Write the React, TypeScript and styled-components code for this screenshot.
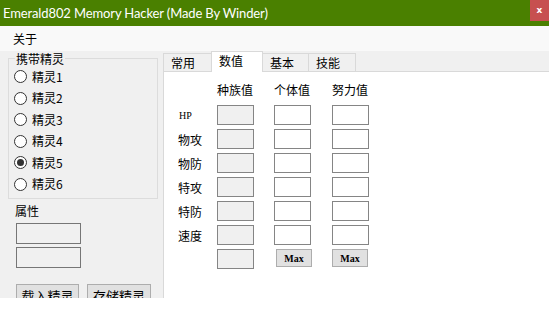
import React from "react";
import styled, { createGlobalStyle } from "styled-components";

const Global = createGlobalStyle`
  html, body { margin: 0; padding: 0; background: #ffffff; }
  body { font-family: "Noto Sans CJK SC", "Noto Sans", sans-serif; font-size: 12px; color: #000; }
  * { box-sizing: border-box; }
`;

const Window = styled.div`
  width: 549px;
  height: 298px;
  display: flex;
  flex-direction: column;
  overflow: hidden;
`;

const TitleBar = styled.div`
  height: 26px;
  background: #4a8000;
  display: flex;
  justify-content: space-between;
  align-items: flex-start;
  flex-shrink: 0;
`;

const TitleText = styled.div`
  font-family: Lato, "Noto Sans", sans-serif;
  font-size: 13px;
  color: #ffffff;
  line-height: 26px;
  padding-left: 3px;
  letter-spacing: -0.12px;
`;

const CloseButton = styled.div`
  width: 19px;
  height: 21px;
  background: #c75050;
  color: #ffffff;
  font-family: "DejaVu Sans", sans-serif;
  font-weight: bold;
  font-size: 9px;
  display: flex;
  align-items: center;
  justify-content: center;
  padding-bottom: 1px;
`;

const MenuBar = styled.div`
  height: 25px;
  background: #f9f9f9;
  display: flex;
  align-items: center;
  padding-left: 13px;
  flex-shrink: 0;
`;

const MenuItem = styled.span`
  font-size: 12px;
  line-height: 14px;
`;

const Body = styled.div`
  flex: 1;
  display: flex;
  background: #f0f0f0;
`;

const LeftPane = styled.div`
  width: 163px;
  flex-shrink: 0;
  display: flex;
  flex-direction: column;
`;

const GroupBox = styled.div`
  position: relative;
  margin: 7px 0 0 8px;
  width: 150px;
  height: 141px;
  border: 1px solid #dcdcdc;
  padding: 7px 0 0 5px;
`;

const Legend = styled.span`
  position: absolute;
  top: -7px;
  left: 6px;
  padding: 0 1px;
  background: #f0f0f0;
  font-size: 12px;
  line-height: 13px;
`;

const RadioRow = styled.div`
  height: 21.5px;
  display: flex;
  align-items: center;
  gap: 5px;
`;

const RadioCircle = styled.span<{ $checked?: boolean }>`
  width: 13px;
  height: 13px;
  border-radius: 50%;
  border: 1px solid #333333;
  background: #ffffff;
  display: flex;
  align-items: center;
  justify-content: center;
  &::after {
    content: "";
    width: 7px;
    height: 7px;
    border-radius: 50%;
    background: ${(p) => (p.$checked ? "#333333" : "transparent")};
  }
`;

const RadioLabel = styled.span`
  font-size: 12px;
  line-height: 14px;
`;

const SectionLabel = styled.div`
  margin: 5px 0 0 15px;
  font-size: 12px;
  line-height: 14px;
`;

const AttrBox = styled.div<{ $gap: number }>`
  margin: ${(p) => p.$gap}px 0 0 16px;
  width: 65px;
  height: 21px;
  border: 1px solid #767676;
  background: #f0f0f0;
`;

const ButtonRow = styled.div`
  margin: 16px 0 0 16px;
  display: flex;
  gap: 8px;
`;

const PushButton = styled.div<{ $w: number }>`
  width: ${(p) => p.$w}px;
  height: 23px;
  border: 1px solid #adadad;
  background: #e1e1e1;
  font-size: 13px;
  display: flex;
  align-items: center;
  justify-content: center;
`;

const TabArea = styled.div`
  flex: 1;
  display: flex;
  flex-direction: column;
`;

const TabStrip = styled.div`
  height: 20px;
  display: flex;
  align-items: flex-end;
  flex-shrink: 0;
`;

const Tab = styled.div<{ $w: number; $active?: boolean }>`
  position: relative;
  z-index: ${(p) => (p.$active ? 2 : 1)};
  width: ${(p) => p.$w}px;
  height: ${(p) => (p.$active ? 21 : 18)}px;
  margin-bottom: ${(p) => (p.$active ? -1 : 0)}px;
  margin-right: -1px;
  border: 1px solid #d9d9d9;
  border-bottom: none;
  background: ${(p) => (p.$active ? "#ffffff" : "#f0f0f0")};
  padding-left: 7px;
  font-size: 12px;
  line-height: ${(p) => (p.$active ? 17 : 18)}px;
`;

const Panel = styled.div`
  flex: 1;
  background: #ffffff;
  border-top: 1px solid #d9d9d9;
  border-left: 1px solid #d9d9d9;
  padding: 11px 0 0 14px;
`;

const StatGrid = styled.div`
  display: grid;
  grid-template-columns: 39px 57px 58px 37px;
  grid-template-rows: 18px repeat(7, 20px);
  row-gap: 4px;
`;

const Header = styled.div`
  font-size: 12px;
  line-height: 14px;
`;

const RowLabel = styled.div<{ $latin?: boolean }>`
  font-family: ${(p) => (p.$latin ? '"Liberation Serif", serif' : '"Noto Sans CJK SC", sans-serif')};
  font-size: ${(p) => (p.$latin ? 10 : 12)}px;
  display: flex;
  align-items: center;
  padding-left: ${(p) => (p.$latin ? 1 : 0)}px;
`;

const ValueBox = styled.div<{ $disabled?: boolean }>`
  width: 37px;
  height: 20px;
  border: 1px solid #858585;
  background: ${(p) => (p.$disabled ? "#f0f0f0" : "#ffffff")};
`;

const MaxButton = styled.div<{ $shift: number }>`
  width: 36px;
  height: 18px;
  margin-left: ${(p) => p.$shift}px;
  border: 1px solid #adadad;
  background: #e1e1e1;
  font-family: "Liberation Serif", serif;
  font-weight: bold;
  font-size: 10px;
  display: flex;
  align-items: center;
  justify-content: center;
`;

const Empty = styled.div``;

const sprites = ["精灵1", "精灵2", "精灵3", "精灵4", "精灵5", "精灵6"];
const stats = ["HP", "物攻", "物防", "特攻", "特防", "速度"];

export default function App() {
  return (
    <>
      <Global />
      <Window>
        <TitleBar>
          <TitleText>Emerald802 Memory Hacker (Made By Winder)</TitleText>
          <CloseButton>x</CloseButton>
        </TitleBar>
        <MenuBar>
          <MenuItem>关于</MenuItem>
        </MenuBar>
        <Body>
          <LeftPane>
            <GroupBox>
              <Legend>携带精灵</Legend>
              {sprites.map((s, i) => (
                <RadioRow key={s}>
                  <RadioCircle $checked={i === 4} />
                  <RadioLabel>{s}</RadioLabel>
                </RadioRow>
              ))}
            </GroupBox>
            <SectionLabel>属性</SectionLabel>
            <AttrBox $gap={5} />
            <AttrBox $gap={3} />
            <ButtonRow>
              <PushButton $w={63}>载入精灵</PushButton>
              <PushButton $w={64}>存储精灵</PushButton>
            </ButtonRow>
          </LeftPane>
          <TabArea>
            <TabStrip>
              <Tab $w={49}>常用</Tab>
              <Tab $w={52} $active>数值</Tab>
              <Tab $w={47}>基本</Tab>
              <Tab $w={48}>技能</Tab>
            </TabStrip>
            <Panel>
              <StatGrid>
                <Empty />
                <Header>种族值</Header>
                <Header>个体值</Header>
                <Header>努力值</Header>
                {stats.map((s, i) => (
                  <React.Fragment key={s}>
                    <RowLabel $latin={i === 0}>{s}</RowLabel>
                    <ValueBox $disabled />
                    <ValueBox />
                    <ValueBox />
                  </React.Fragment>
                ))}
                <Empty />
                <ValueBox $disabled />
                <MaxButton $shift={2}>Max</MaxButton>
                <MaxButton $shift={0}>Max</MaxButton>
              </StatGrid>
            </Panel>
          </TabArea>
        </Body>
      </Window>
    </>
  );
}
